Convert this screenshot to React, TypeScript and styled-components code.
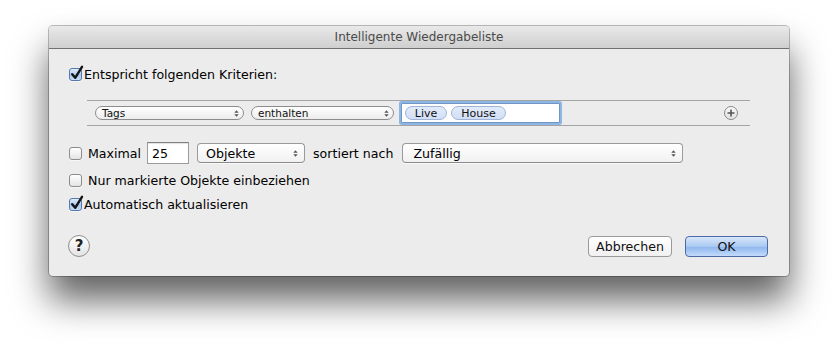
import React from "react";
import styled, { createGlobalStyle } from "styled-components";

const GlobalStyle = createGlobalStyle`
  html, body {
    margin: 0;
    padding: 0;
    background: #ffffff;
  }
  body {
    font-family: "DejaVu Sans", "Liberation Sans", sans-serif;
    color: #000;
  }
`;

const Page = styled.div`
  width: 838px;
  height: 347px;
  padding: 26px 0 0 49px;
  box-sizing: border-box;
  overflow: hidden;
`;

const Window = styled.div`
  width: 740px;
  height: 250px;
  background: #ececec;
  border-radius: 4px;
  box-shadow: 0 24px 36px rgba(0, 0, 0, 0.62), 0 0 0 1px rgba(0, 0, 0, 0.25);
  display: flex;
  flex-direction: column;
  overflow: hidden;
`;

const TitleBar = styled.div`
  height: 22px;
  flex: none;
  background: linear-gradient(#e9e9e9, #cfcfcf);
  border-bottom: 1px solid #707070;
  display: flex;
  align-items: center;
  justify-content: center;
  font-size: 12px;
  color: #4a4a4a;
`;

const Body = styled.div`
  flex: 1;
  display: flex;
  flex-direction: column;
  padding: 0 21px 0 20px;
`;

const Row = styled.div<{ $top: number; $gap?: number }>`
  display: flex;
  align-items: center;
  height: 22px;
  margin-top: ${(p) => p.$top}px;
  font-size: 12.6px;
  gap: ${(p) => p.$gap ?? 6}px;
`;

const Label = styled.span<{ $gap?: number }>`
  margin-left: ${(p) => p.$gap ?? 0}px;
  white-space: nowrap;
`;

const Box = styled.span<{ $checked?: boolean }>`
  position: relative;
  width: 13px;
  height: 13px;
  flex: none;
  box-sizing: border-box;
  border-radius: 3px;
  border: 1px solid ${(p) => (p.$checked ? "#5578ad" : "#8d8d8d")};
  background: ${(p) =>
    p.$checked
      ? "linear-gradient(#e2eefc, #a9c8f2 55%, #c9def8)"
      : "linear-gradient(#ffffff, #e4e4e4)"};
  box-shadow: 0 1px 0 rgba(255, 255, 255, 0.6);
`;

const Tick = styled.svg`
  position: absolute;
  left: 0px;
  top: -3px;
  overflow: visible;
`;

const Checkbox: React.FC<{ checked?: boolean }> = ({ checked }) => (
  <Box $checked={checked}>
    {checked ? (
      <Tick width="13" height="14" viewBox="0 0 13 14">
        <path
          d="M2.2 8.2 L5.2 11.8 L12 0.8"
          fill="none"
          stroke="#151515"
          strokeWidth="2.4"
          strokeLinecap="round"
          strokeLinejoin="round"
        />
      </Tick>
    ) : null}
  </Box>
);

const Criteria = styled.div`
  margin: 15px 18px 0 18px;
  height: 24px;
  border-top: 1px solid #a4a4a4;
  border-bottom: 1px solid #a4a4a4;
  display: flex;
  align-items: center;
  padding: 0 12px 0 8px;
  gap: 7px;
`;

const SmallPopup = styled.div<{ $width: number }>`
  width: ${(p) => p.$width}px;
  height: 14px;
  box-sizing: border-box;
  border: 1px solid #8c8c8c;
  border-radius: 7px;
  background: linear-gradient(#ffffff, #ededed);
  display: flex;
  align-items: center;
  justify-content: space-between;
  padding: 0 4px 0 6px;
  font-size: 10.5px;
  color: #111;
`;

const Arrows: React.FC = () => (
  <svg width="5" height="7" viewBox="0 0 5 7">
    <path d="M0.3 2.8 L2.5 0.3 L4.7 2.8 Z" fill="#555" />
    <path d="M0.3 4.2 L2.5 6.7 L4.7 4.2 Z" fill="#555" />
  </svg>
);

const TokenField = styled.div`
  width: 159px;
  height: 20px;
  box-sizing: border-box;
  background: #fff;
  border: 1px solid #6f96c9;
  box-shadow: 0 0 0 2px #8fb5e3;
  border-radius: 1px;
  display: flex;
  align-items: center;
  gap: 4px;
  padding-left: 3px;
`;

const Token = styled.span<{ $width: number }>`
  width: ${(p) => p.$width}px;
  height: 14px;
  box-sizing: border-box;
  border: 1px solid #9fb4d8;
  border-radius: 7px;
  background: linear-gradient(#e2ebfa, #d1def5);
  font-size: 11px;
  display: flex;
  align-items: center;
  justify-content: center;
  color: #111;
`;

const Spacer = styled.div`
  flex: 1;
`;

const PlusButton = styled.div`
  width: 14px;
  height: 14px;
  box-sizing: border-box;
  border-radius: 50%;
  border: 1px solid #8a8a8a;
  background: linear-gradient(#fafafa, #e2e2e2);
  display: flex;
  align-items: center;
  justify-content: center;
`;

const NumberInput = styled.div`
  width: 42px;
  height: 22px;
  box-sizing: border-box;
  background: #fff;
  border: 1px solid #9c9c9c;
  border-top-color: #7f7f7f;
  box-shadow: inset 0 1px 1px rgba(0, 0, 0, 0.12);
  display: flex;
  align-items: center;
  padding-left: 4px;
`;

const Popup = styled.div<{ $width: number; $gap?: number; $pad?: number }>`
  width: ${(p) => p.$width}px;
  height: 20px;
  box-sizing: border-box;
  margin-left: ${(p) => p.$gap ?? 0}px;
  border: 1px solid #9a9a9a;
  border-bottom-color: #8a8a8a;
  border-radius: 4px;
  background: linear-gradient(#ffffff, #f1f1f1);
  box-shadow: 0 1px 0 rgba(255, 255, 255, 0.7);
  display: flex;
  align-items: center;
  justify-content: space-between;
  padding: 0 6px 0 ${(p) => p.$pad ?? 8}px;
`;

const Footer = styled.div`
  display: flex;
  align-items: center;
  height: 22px;
  margin-top: 20px;
`;

const HelpButton = styled.div`
  width: 22px;
  height: 22px;
  box-sizing: border-box;
  border-radius: 50%;
  border: 1px solid #8f8f8f;
  background: linear-gradient(#ffffff, #e3e3e3);
  display: flex;
  align-items: center;
  justify-content: center;
  font-size: 15px;
  font-weight: bold;
  color: #222;
  margin-left: -1px;
`;

const PushButton = styled.div<{ $primary?: boolean; $gap?: number }>`
  width: ${(p) => (p.$primary ? 83 : 84)}px;
  height: 21px;
  box-sizing: border-box;
  margin-left: ${(p) => p.$gap ?? 0}px;
  border-radius: 4px;
  border: 1px solid ${(p) => (p.$primary ? "#4e6aa5" : "#9a9a9a")};
  background: ${(p) =>
    p.$primary
      ? "linear-gradient(#d9e7fa, #a9c9f2 50%, #8cb5ee 51%, #c3dbfa)"
      : "linear-gradient(#ffffff, #f0f0f0)"};
  display: flex;
  align-items: center;
  justify-content: center;
  font-size: 12.6px;
  color: #111;
`;

const App: React.FC = () => (
  <Page>
    <GlobalStyle />
    <Window>
      <TitleBar>Intelligente Wiedergabeliste</TitleBar>
      <Body>
        <Row $top={14} $gap={2}>
          <Checkbox checked />
          <Label>Entspricht folgenden Kriterien:</Label>
        </Row>
        <Criteria>
          <SmallPopup $width={149}>
            Tags
            <Arrows />
          </SmallPopup>
          <SmallPopup $width={143}>
            enthalten
            <Arrows />
          </SmallPopup>
          <TokenField>
            <Token $width={42}>Live</Token>
            <Token $width={55}>House</Token>
          </TokenField>
          <Spacer />
          <PlusButton>
            <svg width="8" height="8" viewBox="0 0 8 8">
              <path d="M4 0.5 V7.5 M0.5 4 H7.5" stroke="#555" strokeWidth="1.6" />
            </svg>
          </PlusButton>
        </Criteria>
        <Row $top={16}>
          <Checkbox />
          <Label>Maximal</Label>
          <NumberInput>25</NumberInput>
          <Popup $width={108} $gap={2}>
            Objekte
            <Arrows />
          </Popup>
          <Label $gap={2}>sortiert nach</Label>
          <Popup $width={281} $gap={3} $pad={10}>
            Zufällig
            <Arrows />
          </Popup>
        </Row>
        <Row $top={5}>
          <Checkbox />
          <Label>Nur markierte Objekte einbeziehen</Label>
        </Row>
        <Row $top={2} $gap={2}>
          <Checkbox checked />
          <Label>Automatisch aktualisieren</Label>
        </Row>
        <Footer>
          <HelpButton>?</HelpButton>
          <Spacer />
          <PushButton>Abbrechen</PushButton>
          <PushButton $primary $gap={13}>
            OK
          </PushButton>
        </Footer>
      </Body>
    </Window>
  </Page>
);

export default App;
